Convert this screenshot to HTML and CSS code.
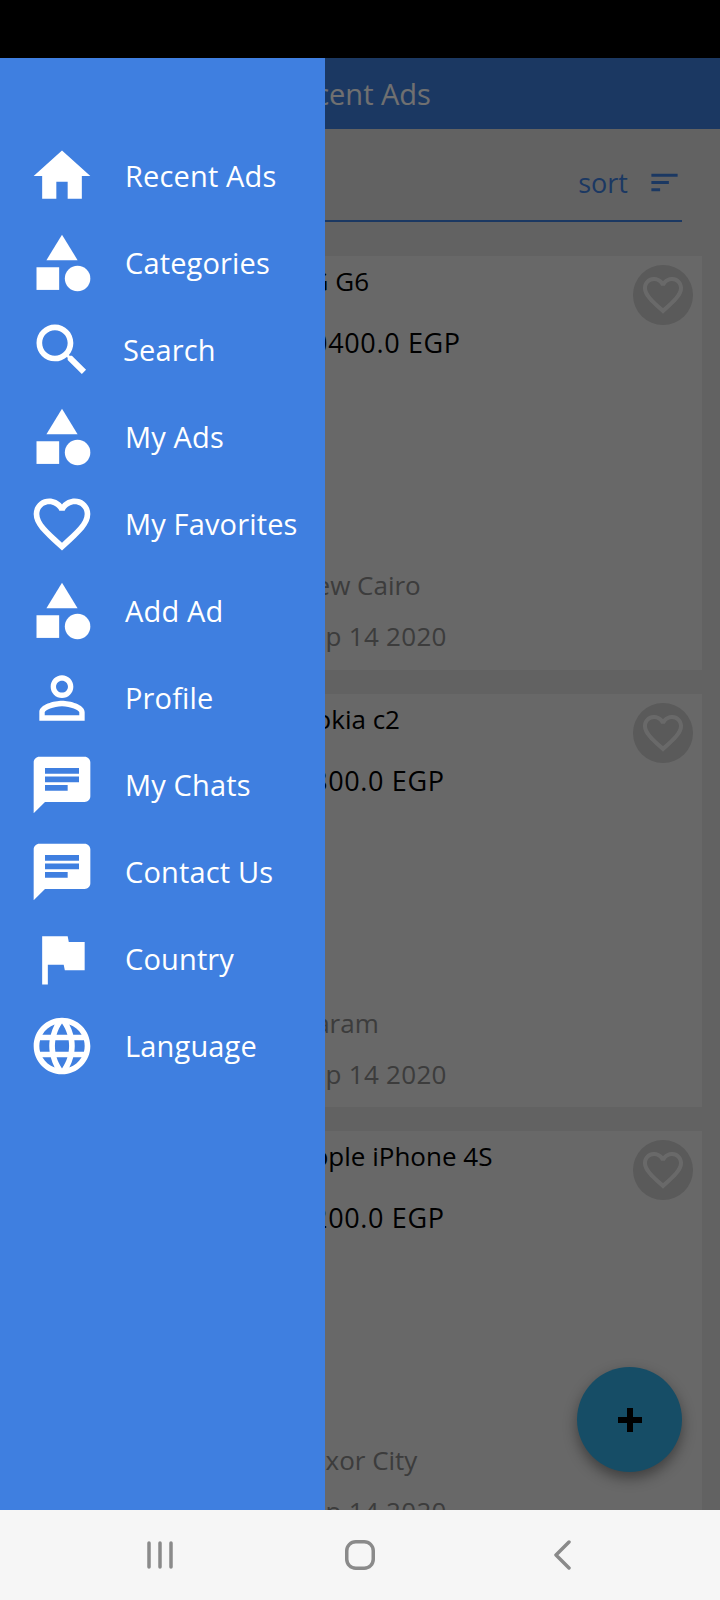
FILE: index.html
```html
<!DOCTYPE html>
<html lang="en">
<head>
    <meta charset="UTF-8">
    <meta name="viewport" content="width=device-width, initial-scale=1.0">
    <title>Recent Ads</title>
    <link rel="stylesheet" href="styles.css">
</head>
<body>

<div class="status-bar"></div>

<div class="screen">
    <div class="app-bar"><span class="app-title">Recent Ads</span></div>

    <div class="sort-row">
        <span class="sort-label">sort</span>
        <svg class="sort-icon" viewBox="0 0 24 24"><path d="M3 18h6v-2H3v2zM3 6v2h18V6H3zm0 7h12v-2H3v2z"/></svg>
    </div>

    <div class="card">
        <div class="card-info">
            <div class="card-title">LG G6</div>
            <div class="card-price">10400.0 EGP</div>
            <div class="card-place">New Cairo</div>
            <div class="card-date">Sep 14 2020</div>
        </div>
        <div class="fav-btn">
            <svg viewBox="0 0 24 24"><path d="M16.5 3c-1.74 0-3.41.81-4.5 2.09C10.91 3.81 9.24 3 7.5 3 4.42 3 2 5.42 2 8.5c0 3.78 3.4 6.86 8.55 11.54L12 21.35l1.45-1.32C18.6 15.36 22 12.28 22 8.5 22 5.42 19.58 3 16.5 3zm-4.4 15.55l-.1.1-.1-.1C7.14 14.24 4 11.39 4 8.5 4 6.5 5.5 5 7.5 5c1.54 0 3.04.99 3.57 2.36h1.87C13.46 5.99 14.96 5 16.5 5c2 0 3.5 1.5 3.5 3.5 0 2.89-3.14 5.74-7.9 10.05z"/></svg>
        </div>
    </div>

    <div class="card">
        <div class="card-info">
            <div class="card-title">Nokia c2</div>
            <div class="card-price">1800.0 EGP</div>
            <div class="card-place">Haram</div>
            <div class="card-date">Sep 14 2020</div>
        </div>
        <div class="fav-btn">
            <svg viewBox="0 0 24 24"><path d="M16.5 3c-1.74 0-3.41.81-4.5 2.09C10.91 3.81 9.24 3 7.5 3 4.42 3 2 5.42 2 8.5c0 3.78 3.4 6.86 8.55 11.54L12 21.35l1.45-1.32C18.6 15.36 22 12.28 22 8.5 22 5.42 19.58 3 16.5 3zm-4.4 15.55l-.1.1-.1-.1C7.14 14.24 4 11.39 4 8.5 4 6.5 5.5 5 7.5 5c1.54 0 3.04.99 3.57 2.36h1.87C13.46 5.99 14.96 5 16.5 5c2 0 3.5 1.5 3.5 3.5 0 2.89-3.14 5.74-7.9 10.05z"/></svg>
        </div>
    </div>

    <div class="card">
        <div class="card-info">
            <div class="card-title">Apple iPhone 4S</div>
            <div class="card-price">1200.0 EGP</div>
            <div class="card-place">Luxor City</div>
            <div class="card-date">Sep 14 2020</div>
        </div>
        <div class="fav-btn">
            <svg viewBox="0 0 24 24"><path d="M16.5 3c-1.74 0-3.41.81-4.5 2.09C10.91 3.81 9.24 3 7.5 3 4.42 3 2 5.42 2 8.5c0 3.78 3.4 6.86 8.55 11.54L12 21.35l1.45-1.32C18.6 15.36 22 12.28 22 8.5 22 5.42 19.58 3 16.5 3zm-4.4 15.55l-.1.1-.1-.1C7.14 14.24 4 11.39 4 8.5 4 6.5 5.5 5 7.5 5c1.54 0 3.04.99 3.57 2.36h1.87C13.46 5.99 14.96 5 16.5 5c2 0 3.5 1.5 3.5 3.5 0 2.89-3.14 5.74-7.9 10.05z"/></svg>
        </div>
    </div>

    <div class="fab">
        <svg viewBox="0 0 26 26"><path d="M13 1v24M1 13h24"/></svg>
    </div>

    <!-- dark layer under the open drawer -->
    <div class="scrim"></div>

    <nav class="drawer">
        <div class="drawer-item">
            <svg viewBox="0 0 24 24"><path d="M10 20v-6h4v6h5v-8h3L12 3 2 12h3v8z"/></svg>
            <span>Recent Ads</span>
        </div>
        <div class="drawer-item">
            <svg viewBox="0 0 24 24"><path d="M12 2l-5.5 9h11z"/><circle cx="17.5" cy="17.5" r="4.5"/><path d="M3 13.5h8v8H3z"/></svg>
            <span>Categories</span>
        </div>
        <div class="drawer-item">
            <svg viewBox="0 0 24 24"><path d="M15.5 14h-.79l-.28-.27C15.41 12.59 16 11.11 16 9.5 16 5.91 13.09 3 9.5 3S3 5.91 3 9.5 5.91 16 9.5 16c1.61 0 3.09-.59 4.23-1.57l.27.28v.79l5 4.99L20.49 19l-4.99-5zm-6 0C7.01 14 5 11.99 5 9.5S7.01 5 9.5 5 14 7.01 14 9.5 11.99 14 9.5 14z"/></svg>
            <span class="item-tight">Search</span>
        </div>
        <div class="drawer-item">
            <svg viewBox="0 0 24 24"><path d="M12 2l-5.5 9h11z"/><circle cx="17.5" cy="17.5" r="4.5"/><path d="M3 13.5h8v8H3z"/></svg>
            <span>My Ads</span>
        </div>
        <div class="drawer-item">
            <svg viewBox="0 0 24 24"><path d="M16.5 3c-1.74 0-3.41.81-4.5 2.09C10.91 3.81 9.24 3 7.5 3 4.42 3 2 5.42 2 8.5c0 3.78 3.4 6.86 8.55 11.54L12 21.35l1.45-1.32C18.6 15.36 22 12.28 22 8.5 22 5.42 19.58 3 16.5 3zm-4.4 15.55l-.1.1-.1-.1C7.14 14.24 4 11.39 4 8.5 4 6.5 5.5 5 7.5 5c1.54 0 3.04.99 3.57 2.36h1.87C13.46 5.99 14.96 5 16.5 5c2 0 3.5 1.5 3.5 3.5 0 2.89-3.14 5.74-7.9 10.05z"/></svg>
            <span>My Favorites</span>
        </div>
        <div class="drawer-item">
            <svg viewBox="0 0 24 24"><path d="M12 2l-5.5 9h11z"/><circle cx="17.5" cy="17.5" r="4.5"/><path d="M3 13.5h8v8H3z"/></svg>
            <span>Add Ad</span>
        </div>
        <div class="drawer-item">
            <svg viewBox="0 0 24 24"><path d="M12 5.9c1.16 0 2.1.94 2.1 2.1s-.94 2.1-2.1 2.1S9.9 9.16 9.9 8s.94-2.1 2.1-2.1m0 9c2.97 0 6.1 1.46 6.1 2.1v1.1H5.9V17c0-.64 3.13-2.1 6.1-2.1M12 4C9.79 4 8 5.79 8 8s1.79 4 4 4 4-1.79 4-4-1.79-4-4-4zm0 9c-2.67 0-8 1.34-8 4v3h16v-3c0-2.66-5.33-4-8-4z"/></svg>
            <span>Profile</span>
        </div>
        <div class="drawer-item">
            <svg viewBox="0 0 24 24"><path d="M20 2H4c-1.1 0-1.99.9-1.99 2L2 22l4-4h14c1.1 0 2-.9 2-2V4c0-1.1-.9-2-2-2zM6 9h12v2H6V9zm8 5H6v-2h8v2zm4-6H6V6h12v2z"/></svg>
            <span>My Chats</span>
        </div>
        <div class="drawer-item">
            <svg viewBox="0 0 24 24"><path d="M20 2H4c-1.1 0-1.99.9-1.99 2L2 22l4-4h14c1.1 0 2-.9 2-2V4c0-1.1-.9-2-2-2zM6 9h12v2H6V9zm8 5H6v-2h8v2zm4-6H6V6h12v2z"/></svg>
            <span>Contact Us</span>
        </div>
        <div class="drawer-item">
            <svg viewBox="0 0 24 24"><path d="M14.4 6L14 4H5v17h2v-7h5.6l.4 2h7V6z"/></svg>
            <span>Country</span>
        </div>
        <div class="drawer-item">
            <svg viewBox="0 0 24 24"><path d="M11.99 2C6.47 2 2 6.48 2 12s4.47 10 9.99 10C17.52 22 22 17.52 22 12S17.52 2 11.99 2zm6.93 6h-2.95c-.32-1.25-.78-2.45-1.38-3.56 1.84.63 3.37 1.91 4.33 3.56zM12 4.04c.83 1.2 1.48 2.53 1.91 3.96h-3.82c.43-1.43 1.08-2.76 1.91-3.96zM4.26 14C4.1 13.36 4 12.69 4 12s.1-1.36.26-2h3.38c-.08.66-.14 1.32-.14 2 0 .68.06 1.34.14 2H4.26zm.82 2h2.95c.32 1.25.78 2.45 1.38 3.56-1.84-.63-3.37-1.9-4.33-3.56zm2.95-8H5.08c.96-1.66 2.49-2.93 4.33-3.56C8.81 5.55 8.35 6.75 8.03 8zM12 19.96c-.83-1.2-1.48-2.53-1.91-3.96h3.82c-.43 1.43-1.08 2.76-1.91 3.96zM14.34 14H9.66c-.09-.66-.16-1.32-.16-2 0-.68.07-1.35.16-2h4.68c.09.65.16 1.32.16 2 0 .68-.07 1.34-.16 2zm.25 5.56c.6-1.11 1.06-2.31 1.38-3.56h2.95c-.96 1.65-2.49 2.93-4.33 3.56zM16.36 14c.08-.66.14-1.32.14-2 0-.68-.06-1.34-.14-2h3.38c.16.64.26 1.31.26 2s-.1 1.36-.26 2h-3.38z"/></svg>
            <span>Language</span>
        </div>
    </nav>
</div>

<div class="nav-bar">
    <svg class="nav-icon" viewBox="0 0 30 30"><path d="M4 3v24M15 3v24M26 3v24"/></svg>
    <svg class="nav-icon" viewBox="0 0 30 30"><rect x="1.75" y="1.75" width="26.5" height="26.5" rx="9"/></svg>
    <svg class="nav-icon" viewBox="0 0 30 30"><path d="M24 2L11 15l13 13"/></svg>
</div>

</body>
</html>
```

FILE: styles.css
```css
* {
    box-sizing: border-box;
}
html, body {
    margin: 0;
    height: 100%;
}
body {
    display: flex;
    flex-direction: column;
    height: 1600px;
    font-family: "Open Sans", Arial, sans-serif;
    background-color: #000;
    overflow: hidden;
}
.status-bar {
    height: 58px;
    background-color: #000;
}
.screen {
    position: relative;
    flex: 1;
    overflow: hidden;
    background-color: #e0e0e0;
}
.app-bar {
    height: 71px;
    display: flex;
    align-items: center;
    padding-left: 281px;
    background-color: #3f7fe0;
}
.app-title {
    color: #fff;
    font-size: 29px;
}
.sort-row {
    display: flex;
    justify-content: flex-end;
    align-items: center;
    height: 93px;
    margin: 0 38px 34px 18px;
    padding-top: 16px;
    border-bottom: 2px solid #3f7fe0;
}
.sort-label {
    color: #3f7fe0;
    font-size: 27px;
}
.sort-icon {
    width: 35px;
    height: 35px;
    margin-left: 19px;
    fill: #3f7fe0;
}
.card {
    position: relative;
    height: 413.5px;
    margin: 0 18px 24px;
    padding-left: 278px;
    background-color: #ececec;
}
.card-info {
    display: flex;
    flex-direction: column;
    height: 100%;
}
.card-title {
    margin-top: 7px;
    line-height: 36px;
    font-size: 26px;
    color: #000;
}
.card-price {
    margin-top: 26px;
    line-height: 36px;
    font-size: 27px;
    letter-spacing: 0.65px;
    color: #000;
}
.card-place {
    margin-top: 206px;
    line-height: 36px;
    font-size: 26px;
    color: #888;
}
.card-date {
    margin-top: 15px;
    line-height: 36px;
    font-size: 26px;
    letter-spacing: 0.3px;
    color: #888;
}
.fav-btn {
    position: absolute;
    top: 9px;
    right: 9px;
    display: flex;
    align-items: center;
    justify-content: center;
    width: 60px;
    height: 60px;
    border-radius: 50%;
    background-color: #ccc;
}
.fav-btn svg {
    width: 48px;
    height: 48px;
    fill: #f0f0f0;
}
.fab {
    position: absolute;
    right: 38px;
    top: 1309px;
    display: flex;
    align-items: center;
    justify-content: center;
    width: 105px;
    height: 105px;
    border-radius: 50%;
    background-color: #32afe8;
    box-shadow: 0 6px 14px rgba(0, 0, 0, 0.4);
}
.fab svg {
    width: 26px;
    height: 26px;
    fill: none;
    stroke: #000;
    stroke-width: 6;
}
.scrim {
    position: absolute;
    inset: 0;
    background-color: rgba(0, 0, 0, 0.56);
}
.drawer {
    position: absolute;
    top: 0;
    left: 0;
    bottom: 0;
    width: 325px;
    padding-top: 74px;
    background-color: #3f7fe0;
}
.drawer-item {
    display: flex;
    align-items: center;
    height: 87px;
    padding-left: 28px;
    color: #fff;
    font-size: 29px;
    letter-spacing: 0.15px;
}
.drawer-item svg {
    flex: none;
    width: 68px;
    height: 68px;
    margin-right: 29px;
    fill: #fff;
}
.item-tight {
    margin-left: -2px;
}
.nav-bar {
    display: flex;
    justify-content: center;
    align-items: center;
    gap: 170px;
    height: 90px;
    background-color: #f6f6f6;
}
.nav-icon {
    width: 30px;
    height: 30px;
    fill: none;
    stroke: #8a8a8a;
    stroke-width: 3.5;
    stroke-linecap: round;
    stroke-linejoin: round;
}
```
